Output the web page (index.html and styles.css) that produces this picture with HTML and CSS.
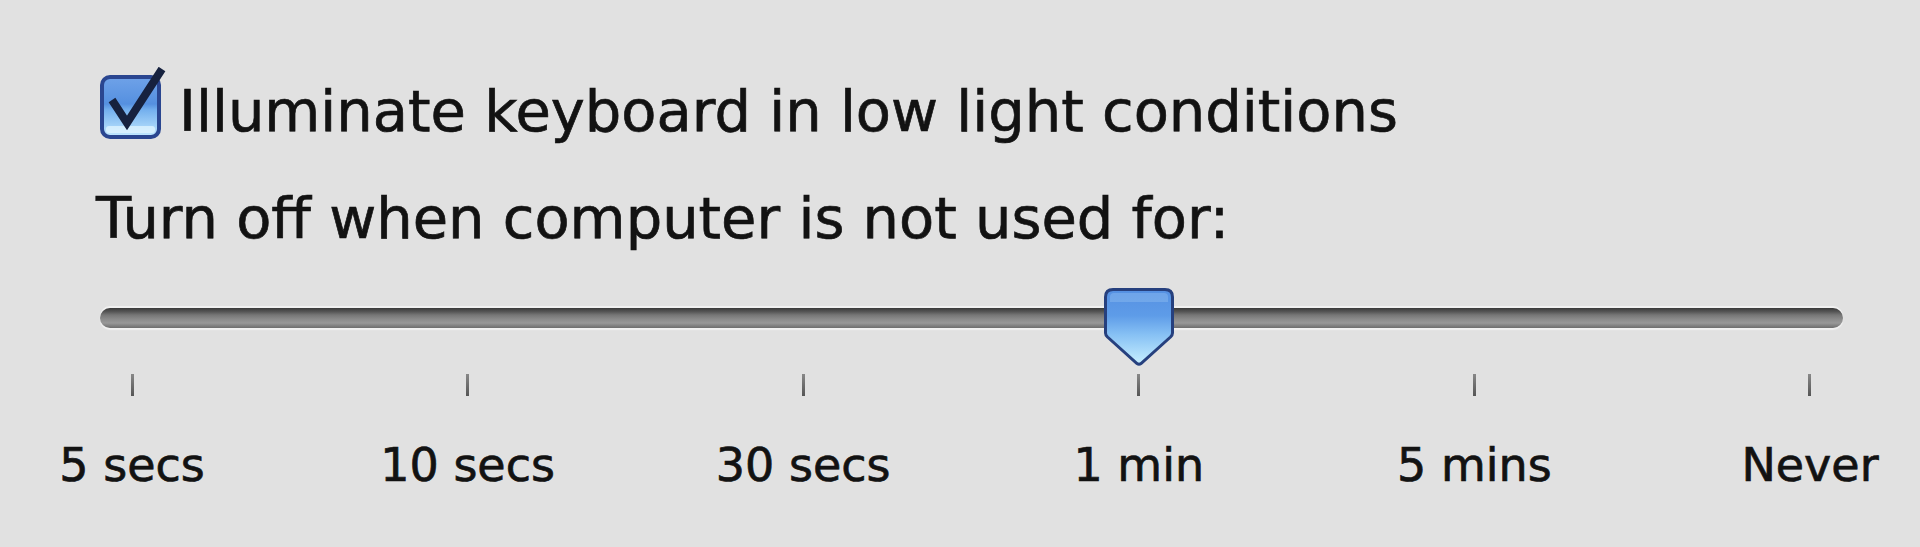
FILE: index.html
```html
<!DOCTYPE html>
<html>
<head>
<meta charset="utf-8">
<link rel="stylesheet" href="styles.css">
</head>
<body>
<div class="pane">
  <label class="check-row">
    <svg class="checkbox" width="66" height="72" viewBox="0 0 66 72">
      <defs>
        <linearGradient id="cbfill" x1="0" y1="0" x2="0" y2="1">
          <stop offset="0" stop-color="#6fa2e8"/>
          <stop offset="0.45" stop-color="#5590e0"/>
          <stop offset="0.55" stop-color="#74b0ee"/>
          <stop offset="1" stop-color="#c4eaff"/>
        </linearGradient>
      </defs>
      <rect x="2" y="10" width="57" height="60" rx="8" ry="8" fill="url(#cbfill)" stroke="#2a4690" stroke-width="4"/>
      <rect x="6" y="59" width="49" height="7" rx="3" fill="#e2f6ff" opacity="0.75"/>
      <path d="M12 33 L27 56 L62 2" fill="none" stroke="#16213e" stroke-width="8" stroke-linejoin="miter"/>
    </svg>
    <span class="label-main">Illuminate keyboard in low light conditions</span>
  </label>
  <div class="label-sub">Turn off when computer is not used for:</div>
  <div class="slider">
    <div class="track"></div>
    <svg class="thumb" style="left:1004px" width="70" height="78" viewBox="0 0 70 78">
      <defs>
        <linearGradient id="thfill" x1="0" y1="0" x2="0" y2="1">
          <stop offset="0" stop-color="#5590e2"/>
          <stop offset="0.35" stop-color="#5e9ce8"/>
          <stop offset="0.6" stop-color="#86c0f4"/>
          <stop offset="1" stop-color="#c8f0ff"/>
        </linearGradient>
      </defs>
      <path d="M9 1.5 H61 Q68.5 1.5 68.5 9 V45 Q68.5 47 66.5 49 L37 75.5 Q35 77 33 75.5 L3.5 49 Q1.5 47 1.5 45 V9 Q1.5 1.5 9 1.5 Z" fill="url(#thfill)" stroke="#26407e" stroke-width="3"/>
      <path d="M10 5 H60 Q64 5 64 9 V14 H6 V9 Q6 5 10 5 Z" fill="#8fbcf0" opacity="0.45"/>
    </svg>
    <div class="ticks">
      <div class="stop"><span class="tick"></span><span class="stop-label">5 secs</span></div>
      <div class="stop"><span class="tick"></span><span class="stop-label">10 secs</span></div>
      <div class="stop"><span class="tick"></span><span class="stop-label">30 secs</span></div>
      <div class="stop"><span class="tick"></span><span class="stop-label">1 min</span></div>
      <div class="stop"><span class="tick"></span><span class="stop-label">5 mins</span></div>
      <div class="stop"><span class="tick"></span><span class="stop-label">Never</span></div>
    </div>
  </div>
</div>
</body>
</html>
```
FILE: styles.css
```css
html, body {
  margin: 0;
  padding: 0;
  background: #e1e1e1;
}
body {
  width: 1920px;
  height: 547px;
  overflow: hidden;
  font-family: "DejaVu Sans", "Liberation Sans", sans-serif;
  color: #121212;
  -webkit-text-stroke: 0.7px #121212;
}
.pane {
  display: flex;
  flex-direction: column;
  padding: 67px 0 0 100px;
}
.check-row {
  display: flex;
  align-items: flex-end;
  height: 72px;
}
.checkbox {
  display: block;
  flex: none;
}
.label-main {
  font-size: 57.5px;
  line-height: 55px;
  margin-left: 13px;
}
.label-sub {
  font-size: 57.5px;
  line-height: 55px;
  margin: 52px 0 0 -4px;
}
.slider {
  position: relative;
  width: 1743px;
  margin-top: 42px;
  padding-top: 20px;
}
.track {
  height: 20px;
  border-radius: 10px;
  background: linear-gradient(#3a3a3a 0%, #555 18%, #767676 35%, #8a8a8a 55%, #989898 75%, #6e6e6e 100%);
  box-shadow: 0 -2px 0 rgba(255, 255, 255, 0.55), 0 2px 1px #f2f2f2;
}
.thumb {
  position: absolute;
  top: 0;
  display: block;
}
.ticks {
  display: flex;
  justify-content: space-between;
  padding: 46px 33px 0 32px;
}
.stop {
  width: 0;
  display: flex;
  flex-direction: column;
  align-items: center;
}
.tick {
  flex: none;
  width: 3px;
  height: 22px;
  background: linear-gradient(#888, #555);
}
.stop-label {
  flex: none;
  white-space: nowrap;
  font-size: 46px;
  line-height: 46px;
  margin-top: 46px;
}
```
